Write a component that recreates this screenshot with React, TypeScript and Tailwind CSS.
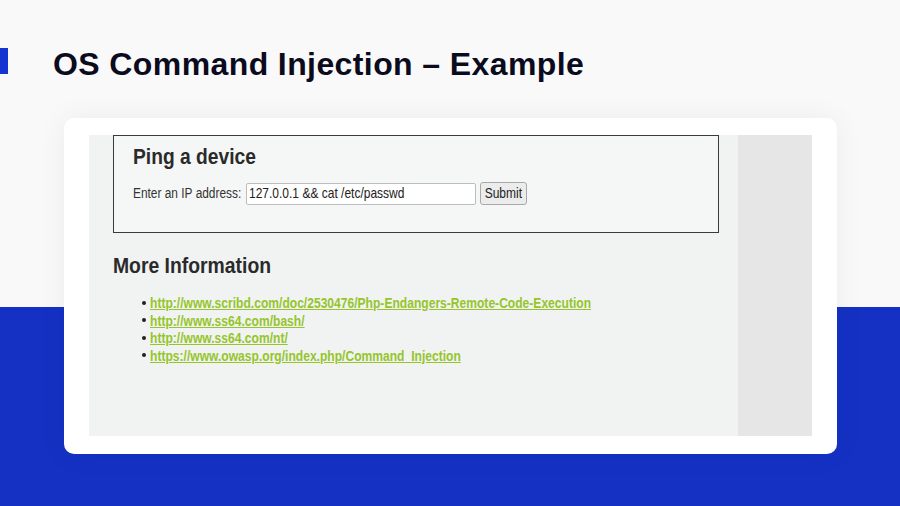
export default function App() {
  const links = [
    "http://www.scribd.com/doc/2530476/Php-Endangers-Remote-Code-Execution",
    "http://www.ss64.com/bash/",
    "http://www.ss64.com/nt/",
    "https://www.owasp.org/index.php/Command_Injection",
  ];
  return (
    <div
      className="w-[900px] h-[506px] overflow-hidden bg-[linear-gradient(to_bottom,#f9f9f9_0px,#f9f9f9_307px,#1431c4_307px)]"
      style={{ fontFamily: '"Liberation Sans", Arial, sans-serif' }}
    >
      {/* Slide heading */}
      <div className="flex items-center pt-[48px] h-[74px]">
        <div className="w-[8px] h-[26px] bg-[#1634d0]" />
        <h1 className="ml-[45px] mt-[5px] text-[32px] leading-none font-bold text-[#0b0b1e] tracking-[0.4px]">
          OS Command Injection – Example
        </h1>
      </div>

      {/* Card holding the web page */}
      <div className="ml-[64px] mt-[44px] w-[773px] h-[336px] rounded-[10px] bg-white shadow-[0_0_30px_rgba(0,0,0,0.06)] px-[25px] pt-[17px] pb-[18px]">
        <div className="flex h-full">
          <div className="flex-1 bg-[#f1f3f3] pl-[24px] pr-[19px]">
            {/* Ping form */}
            <div className="h-[98px] border border-[#3a3a3a] bg-[#f5f7f7] pl-[19px] pt-[8px]">
              <h2 className="text-[21.5px] leading-[26px] font-bold text-[#2a2a2a] whitespace-nowrap">
                <span className="inline-block origin-left scale-x-[0.895]">Ping a device</span>
              </h2>
              <div className="flex items-center mt-[12px] text-[#333]">
                <div className="w-[113px] text-[14px] whitespace-nowrap">
                  <span className="inline-block origin-left scale-x-[0.85]">Enter an IP address:</span>
                </div>
                <div className="w-[230px] h-[22px] bg-white border border-[#bdbdbd] rounded-[2px] flex items-center pl-[2px] text-[15px] text-[#222] whitespace-nowrap overflow-hidden">
                  <span className="inline-block origin-left scale-x-[0.8]">127.0.0.1 &amp;&amp; cat /etc/passwd</span>
                </div>
                <div className="ml-[4px] w-[47px] h-[23px] bg-[#ececec] border border-[#a9a9a9] rounded-[3px] flex items-center justify-center text-[15px] text-[#222]">
                  <span className="inline-block scale-x-[0.8]">Submit</span>
                </div>
              </div>
            </div>

            {/* More information */}
            <h2 className="mt-[20px] text-[21.5px] leading-[26px] font-bold text-[#2a2a2a] whitespace-nowrap">
              <span className="inline-block origin-left scale-x-[0.9]">More Information</span>
            </h2>
            <ul className="mt-[15px] pl-[29px] text-[15px] leading-[17.5px]">
              {links.map((l) => (
                <li key={l} className="flex items-center whitespace-nowrap">
                  <span className="w-[4px] h-[4px] rounded-full bg-[#222] mr-[4px] shrink-0" />
                  <span className="inline-block origin-left scale-x-[0.805] underline font-bold text-[#95c52b]">{l}</span>
                </li>
              ))}
            </ul>
          </div>
          <div className="w-[74px] bg-[#e6e6e6]" />
        </div>
      </div>
    </div>
  );
}
